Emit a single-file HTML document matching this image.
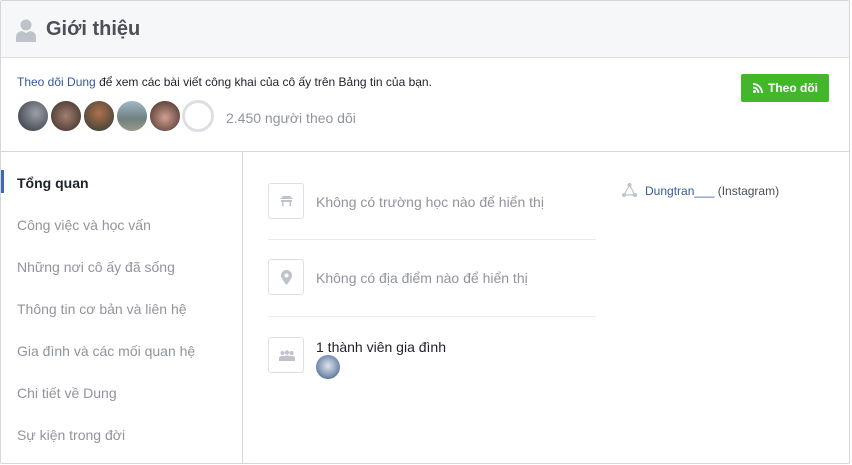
<!DOCTYPE html>
<html><head><meta charset="utf-8"><style>
*{margin:0;padding:0;box-sizing:border-box}
body{width:852px;height:465px;background:#fff;font-family:"Liberation Sans",Arial,sans-serif;position:relative;overflow:hidden}
.box{position:absolute;left:0;top:0;width:850px;height:464px;border:1px solid #d3d6db;border-radius:2px}
.hdr{position:absolute;left:1px;top:1px;width:848px;height:57px;background:#f6f7f9;border-bottom:1px solid #dddfe2}
.hdr h1{position:absolute;left:45px;top:17px;font-size:20px;font-weight:bold;color:#4b4f56}
.follow{position:absolute;left:1px;top:58px;width:848px;height:94px;border-bottom:1px solid #d3d6db}
.ft{position:absolute;left:16px;top:17px;font-size:12px;color:#1d2129}
.ft a{color:#365899}
.av{position:absolute;top:42px;width:32px;height:32px;border-radius:50%;border:1px solid #fff}
.cnt{position:absolute;left:225px;top:52px;font-size:14px;color:#90949c}
.btn{position:absolute;left:740px;top:16px;width:88px;height:28px;background:#42b72a;border-radius:2px;color:#fff;font-weight:bold;font-size:12px;line-height:28px;padding-left:27px}
.nav{position:absolute;left:1px;top:152px;width:242px;height:311px;border-right:1px solid #d3d6db}
.nav div{position:absolute;left:16px;font-size:14px;color:#90949c}
.bar{position:absolute;left:0;top:18px;width:3px;height:23px;background:#4267b2}
.ib{position:absolute;left:268px;width:36px;height:36px;border:1px solid #dddfe2;border-radius:3px}
.it{position:absolute;left:316px;font-size:14px;color:#90949c}
.hr{position:absolute;left:268px;width:328px;height:1px;background:#e9ebee}
</style></head><body>
<div class="box"></div>
<div class="hdr">
<svg style="position:absolute;left:14px;top:17px" width="22" height="24" viewBox="0 0 22 24"><circle cx="11" cy="7" r="5.5" fill="#bec3c9"/><path d="M1 24 V19 Q1 14 7 13 L11 15 L15 13 Q21 14 21 19 V24Z" fill="#bec3c9"/></svg>
<h1>Giới thiệu</h1></div>
<div class="follow">
<div class="ft"><a>Theo dõi Dung</a> để xem các bài viết công khai của cô ấy trên Bảng tin của bạn.</div>
<div class="av" style="left:16px;background:radial-gradient(circle at 60% 40%,#9aa0aa,#2d3036)"></div>
<div class="av" style="left:49px;background:radial-gradient(circle at 50% 50%,#a08070,#3a2a25)"></div>
<div class="av" style="left:82px;background:radial-gradient(circle at 50% 40%,#b07050,#2a3a30)"></div>
<div class="av" style="left:115px;background:linear-gradient(#a0b8c8,#708080 60%,#9a9a8a)"></div>
<div class="av" style="left:148px;background:radial-gradient(circle at 50% 55%,#d0a090,#3a2520)"></div>
<div class="av" style="left:181px;background:#fff;border:3px solid #dddfe2"></div>
<div class="cnt">2.450 người theo dõi</div>
<div class="btn"><svg style="position:absolute;left:12px;top:9px" width="10" height="10" viewBox="0 0 10 10"><circle cx="1.5" cy="8.5" r="1.5" fill="#fff"/><path d="M0 4.5A5.5 5.5 0 0 1 5.5 10M0 1A9 9 0 0 1 9 10" stroke="#fff" stroke-width="1.8" fill="none"/></svg>Theo dõi</div>
</div>
<div class="nav">
<div class="bar" style="left:0"></div>
<div style="top:23px;color:#1d2129;font-weight:bold">Tổng quan</div>
<div style="top:65px">Công việc và học vấn</div>
<div style="top:107px">Những nơi cô ấy đã sống</div>
<div style="top:149px">Thông tin cơ bản và liên hệ</div>
<div style="top:191px">Gia đình và các mối quan hệ</div>
<div style="top:233px">Chi tiết về Dung</div>
<div style="top:275px">Sự kiện trong đời</div>
</div>
<div class="ib" style="top:183px"><svg style="position:absolute;left:11px;top:12px" width="13" height="11" viewBox="0 0 13 11"><path d="M3 0H10L13 3H0Z" fill="#bec3c9"/><rect x="1" y="4" width="11" height="2" fill="#bec3c9"/><rect x="2" y="6" width="1.5" height="4" fill="#bec3c9"/><rect x="9.5" y="6" width="1.5" height="4" fill="#bec3c9"/></svg></div>
<div class="it" style="top:194px">Không có trường học nào để hiển thị</div>
<div class="hr" style="top:239px"></div>
<div class="ib" style="top:259px"><svg style="position:absolute;left:12px;top:10px" width="11" height="15" viewBox="0 0 11 15"><path d="M5.5 0A5.5 5.5 0 0 0 0 5.5C0 9 5.5 15 5.5 15S11 9 11 5.5A5.5 5.5 0 0 0 5.5 0Z" fill="#bec3c9"/><circle cx="5.5" cy="5.5" r="2" fill="#fff"/></svg></div>
<div class="it" style="top:270px">Không có địa điểm nào để hiển thị</div>
<div class="hr" style="top:316px"></div>
<div class="ib" style="top:337px"><svg style="position:absolute;left:10px;top:12px" width="16" height="11" viewBox="0 0 16 11"><circle cx="3.5" cy="3" r="2" fill="#bec3c9"/><circle cx="8" cy="2.5" r="2.2" fill="#bec3c9"/><circle cx="12.5" cy="3" r="2" fill="#bec3c9"/><path d="M0 11V8Q0 6 3.5 6T7 8V11ZM4.5 11V7.5Q4.5 5.5 8 5.5T11.5 7.5V11ZM9 11V8Q9 6 12.5 6T16 8V11Z" fill="#bec3c9"/></svg></div>
<div class="it" style="top:339px;color:#1d2129">1 thành viên gia đình</div>
<div style="position:absolute;left:316px;top:355px;width:24px;height:24px;border-radius:50%;background:radial-gradient(circle at 50% 45%,#dfe4ee,#7890b0 60%,#304058)"></div>
<svg style="position:absolute;left:622px;top:183px" width="15" height="14" viewBox="0 0 15 14"><path d="M7.5 2L2 12H13Z" stroke="#bec3c9" stroke-width="1.2" fill="none"/><circle cx="7.5" cy="2" r="2" fill="#bec3c9"/><circle cx="2" cy="12" r="2" fill="#bec3c9"/><circle cx="13" cy="12" r="2" fill="#bec3c9"/></svg>
<div style="position:absolute;left:645px;top:184px;font-size:12px;color:#4b4f56"><span style="color:#365899">Dungtran___</span> (Instagram)</div>
</body></html>
